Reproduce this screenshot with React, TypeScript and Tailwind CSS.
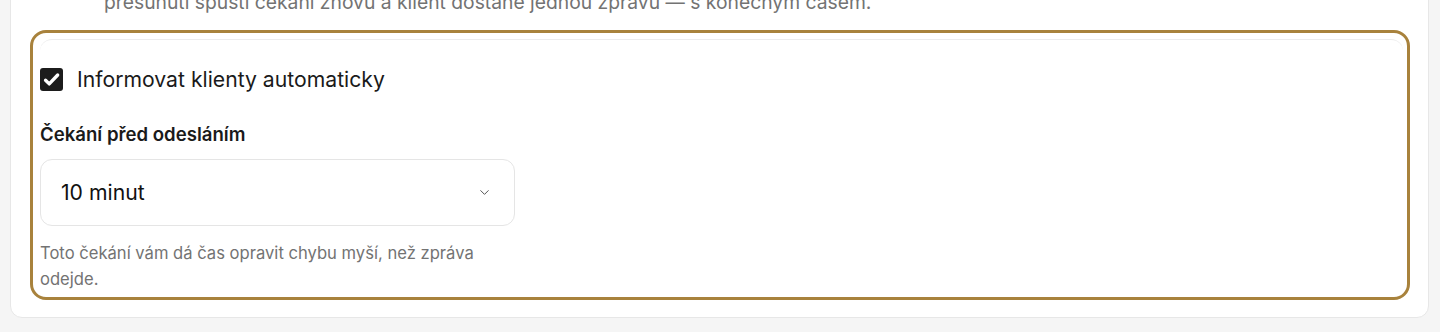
import { ChevronDown } from 'lucide-react'

export default function App() {
    return (
        <div className="h-[332px] overflow-hidden bg-[#f5f5f5] pl-[10px] pr-[11px] font-['Inter',sans-serif]">
            <div className="-mt-[13px] rounded-xl border border-[#e7e7e7] bg-white">
                {/* tail of the previous hint */}
                <p className="pl-[93px] text-[19.3px] leading-[28px] text-[#737373]">
                    přesunutí spustí čekání znovu a klient dostane jednou zprávu — s konečným časem.
                </p>

                {/* highlighted section */}
                <div className="mt-[14px] mb-[17px] ml-[19px] mr-[18px] rounded-[16px] border-[3px] border-[#a8823c] pt-[6px] pl-[7px] pr-[4px]">
                    <div className="rounded-t-xl border-t border-[#ececec] pt-[27px] pb-[5px]">
                        <label className="flex items-center gap-[14px]">
                            <span className="flex h-[23px] w-[23px] items-center justify-center rounded-[3px] bg-[#1c1c1c]">
                                <svg viewBox="0 0 16 16" className="h-[19px] w-[19px]" fill="none" stroke="white" strokeWidth="2.8" strokeLinecap="round" strokeLinejoin="round">
                                    <path d="M3 8.6l3.1 3.1L13.2 4.2" />
                                </svg>
                            </span>
                            <span className="text-[21.2px] leading-[24px] text-[#1a1a1a]">Informovat klienty automaticky</span>
                        </label>

                        <div className="mt-[31px] text-[18.6px] font-semibold leading-[24px] text-[#1a1a1a]">Čekání před odesláním</div>

                        <div className="mt-[13px] flex h-[67px] w-[475px] items-center justify-between rounded-xl border border-[#e5e5e5] pl-[20px] pr-[22px]">
                            <span className="text-[21.2px] text-[#111]">10 minut</span>
                            <ChevronDown className="h-[15px] w-[15px] text-[#555]" strokeWidth={1.6} />
                        </div>

                        <p className="mt-[14px] w-[470px] text-[16.6px] leading-[26px] text-[#737373]">
                            Toto čekání vám dá čas opravit chybu myší, než zpráva odejde.
                        </p>
                    </div>
                </div>
            </div>
        </div>
    )
}
